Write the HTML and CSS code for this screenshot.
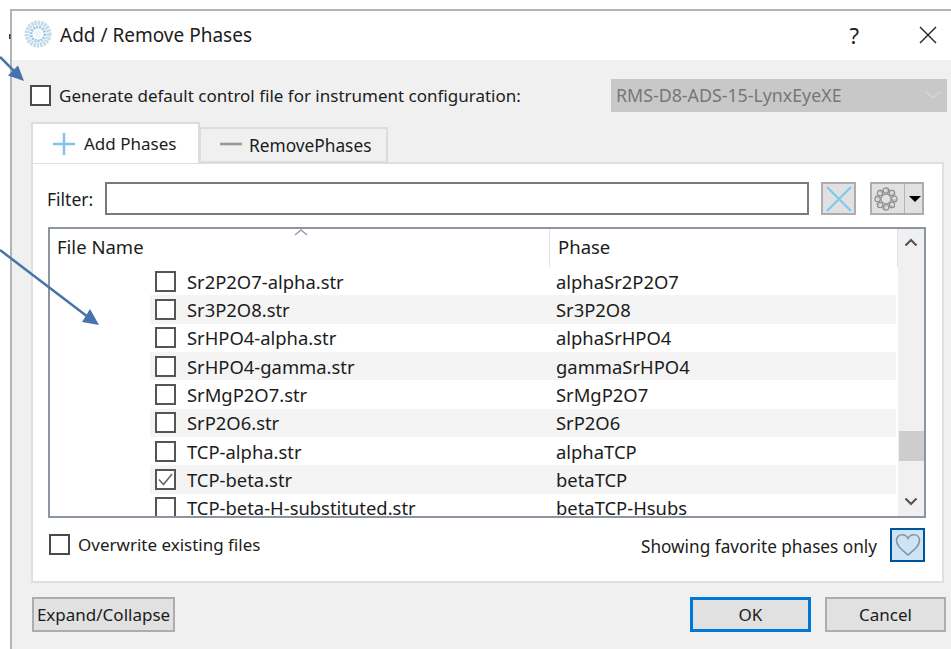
FILE: index.html
```html
<!DOCTYPE html>
<html lang="en">
<head>
<meta charset="utf-8">
<title>Add / Remove Phases</title>
<link rel="stylesheet" href="styles.css">
</head>
<body>
<div class="dialog">
  <header class="titlebar">
    <svg class="app-icon" width="28" height="28" viewBox="0 0 28 28" fill="none">
      <circle cx="14" cy="14" r="11" stroke="#c3dcec" stroke-width="5" stroke-dasharray="2.4 0.8"/>
      <circle cx="14" cy="14" r="6.8" stroke="#9cc3dd" stroke-width="2.6" stroke-dasharray="2 1"/>
      <circle cx="14" cy="14" r="3.4" fill="#eef4f8"/>
    </svg>
    <span class="title">Add / Remove Phases</span>
    <span class="help">?</span>
    <svg class="close" width="18" height="18" viewBox="0 0 18 18"><path d="M1 1l16 16M17 1L1 17" stroke="#222" stroke-width="1.4" fill="none"/></svg>
  </header>

  <div class="body">
    <div class="config-row">
      <label class="check-label"><span class="check"></span><span class="config-text">Generate default control file for instrument configuration:</span></label>
      <div class="select">
        <span>RMS-D8-ADS-15-LynxEyeXE</span>
        <svg width="18" height="10" viewBox="0 0 18 10"><path d="M1.5 1.5L9 8l7.500-6.500" stroke="#d8d8d8" stroke-width="1.300" fill="none"/></svg>
      </div>
    </div>

    <div class="tabs">
      <div class="tab tab-active">
        <svg width="24" height="24" viewBox="0 0 24 24"><path d="M12 1v22M1 12h22" stroke="#7cc4ea" stroke-width="2.400" fill="none"/></svg>
        <span>Add Phases</span>
      </div>
      <div class="tab tab-idle">
        <svg width="24" height="24" viewBox="0 0 24 24"><path d="M1 11h22" stroke="#9a9a90" stroke-width="2.600" fill="none"/></svg>
        <span>RemovePhases</span>
      </div>
    </div>

    <section class="pane">
      <div class="filter-row">
        <span class="filter-label">Filter:</span>
        <div class="filter-input"></div>
        <div class="tool-btn clear-btn">
          <svg width="28" height="26" viewBox="0 0 28 26"><path d="M2 1l24 24M26 1L2 25" stroke="#80c8ee" stroke-width="2.200" fill="none"/></svg>
        </div>
        <div class="tool-btn gear-btn">
          <svg class="gear" width="26" height="26" viewBox="0 0 26 26" fill="none">
            <circle cx="13" cy="13" r="5" stroke="#999" stroke-width="1.300"/>
            <circle cx="13" cy="13" r="8.600" stroke="#999" stroke-width="5" stroke-dasharray="3.400 3.355" opacity="0.35"/>
            <g stroke="#8f8f8f" stroke-width="1.100">
              <circle cx="13" cy="4.600" r="2.700"/><circle cx="13" cy="21.400" r="2.700"/>
              <circle cx="4.600" cy="13" r="2.700"/><circle cx="21.400" cy="13" r="2.700"/>
              <circle cx="7.060" cy="7.060" r="2.700"/><circle cx="18.940" cy="7.060" r="2.700"/>
              <circle cx="7.060" cy="18.940" r="2.700"/><circle cx="18.940" cy="18.940" r="2.700"/>
            </g>
          </svg>
          <span class="gear-divider"></span>
          <span class="caret"></span>
        </div>
      </div>

      <div class="table">
        <div class="table-main">
          <div class="table-head">
            <svg class="sort" width="14" height="7" viewBox="0 0 14 7"><path d="M1 6l6-5 6 5" stroke="#9a9a9a" stroke-width="1.400" fill="none"/></svg>
            <div class="col-file">File Name</div>
            <div class="col-phase">Phase</div>
          </div>
          <div class="rows">
            <div class="row"><span class="check"></span><span class="file">Sr2P2O7-alpha.str</span><span class="phase">alphaSr2P2O7</span></div>
            <div class="row alt"><span class="check"></span><span class="file">Sr3P2O8.str</span><span class="phase">Sr3P2O8</span></div>
            <div class="row"><span class="check"></span><span class="file">SrHPO4-alpha.str</span><span class="phase">alphaSrHPO4</span></div>
            <div class="row alt"><span class="check"></span><span class="file">SrHPO4-gamma.str</span><span class="phase">gammaSrHPO4</span></div>
            <div class="row"><span class="check"></span><span class="file">SrMgP2O7.str</span><span class="phase">SrMgP2O7</span></div>
            <div class="row alt"><span class="check"></span><span class="file">SrP2O6.str</span><span class="phase">SrP2O6</span></div>
            <div class="row"><span class="check"></span><span class="file">TCP-alpha.str</span><span class="phase">alphaTCP</span></div>
            <div class="row alt"><span class="check checked"><svg width="17" height="17" viewBox="0 0 17 17"><path d="M2 8.500l4.500 5L15 3" stroke="#666" stroke-width="1.600" fill="none"/></svg></span><span class="file">TCP-beta.str</span><span class="phase">betaTCP</span></div>
            <div class="row"><span class="check"></span><span class="file">TCP-beta-H-substituted.str</span><span class="phase">betaTCP-Hsubs</span></div>
          </div>
        </div>
        <div class="scrollbar">
          <svg class="arrow-up" width="14" height="9" viewBox="0 0 14 9"><path d="M1.500 7.500L7 2l5.500 5.500" stroke="#555" stroke-width="2.200" fill="none"/></svg>
          <div class="thumb"></div>
          <svg class="arrow-down" width="14" height="9" viewBox="0 0 14 9"><path d="M1.500 1.500L7 7l5.500-5.500" stroke="#555" stroke-width="2.200" fill="none"/></svg>
        </div>
      </div>

      <div class="options-row">
        <label class="check-label overwrite"><span class="check"></span><span>Overwrite existing files</span></label>
        <span class="favorites">Showing favorite phases only</span>
        <div class="heart-btn">
          <svg width="26" height="24" viewBox="0 0 26 24"><path d="M13 22C6 16 1.500 12.500 1.500 7.500 1.500 4 4 1.800 7 1.800c2.500 0 4.800 1.400 6 3.700 1.200-2.300 3.500-3.700 6-3.700 3 0 5.500 2.200 5.500 5.700C24.500 12.500 20 16 13 22z" stroke="#8c9298" stroke-width="1.600" fill="none"/></svg>
        </div>
      </div>
    </section>

    <footer class="footer">
      <button class="btn expand">Expand/Collapse</button>
      <span class="spacer"></span>
      <button class="btn primary">OK</button>
      <button class="btn cancel">Cancel</button>
    </footer>
  </div>
</div>

<!-- Callout arrows drawn over the dialog -->
<svg class="callouts" width="951" height="649" viewBox="0 0 951 649">
  <path d="M0 57L20 77" stroke="#4674aa" stroke-width="2.500" fill="none"/>
  <path d="M24 81L8 75.500 18 65.500z" fill="#4674aa"/>
  <path d="M0 250L88 317" stroke="#4674aa" stroke-width="2.500" fill="none"/>
  <path d="M99 325L82 322 90 309z" fill="#4674aa"/>
  <rect x="9" y="34" width="1.500" height="5" fill="#333"/>
</svg>
</body>
</html>
```

FILE: styles.css
```css
* { box-sizing: border-box; }

html, body { margin: 0; height: 100%; }

body {
  background: #fff;
  font-family: "Noto Sans", "Open Sans", sans-serif;
  font-size: 17px;
  color: #1c1c1c;
  overflow: hidden;
}

.dialog {
  margin: 9px 0 0 10px;
  height: 640px;
  border-top: 2px solid #b4b4b4;
  border-left: 2px solid #b4b4b4;
  display: flex;
  flex-direction: column;
  background: #f0f0f0;
}

.titlebar {
  height: 49px;
  flex: none;
  background: #fff;
  display: flex;
  align-items: center;
  padding: 0 14px 2px 12px;
}

.app-icon { margin-right: 8px; margin-bottom: 1px; }
.title { font-size: 19px; flex: 1; }
.help { font-size: 22px; margin-right: 60px; }

.body { flex: 1; padding: 0 0 0 18px; }

.check {
  width: 21px;
  height: 21px;
  flex: none;
  border: 2px solid #4a4a4a;
  background: #fff;
  display: inline-flex;
  align-items: center;
  justify-content: center;
}

.check-label { display: flex; align-items: center; gap: 8px; }

.config-row {
  height: 62px;
  display: flex;
  align-items: center;
  justify-content: space-between;
  padding: 8px 4px 0 0;
}

.select {
  width: 336px;
  height: 33px;
  background: #c8c8c8;
  color: #777;
  font-size: 17.800px;
  display: flex;
  align-items: center;
  justify-content: space-between;
  padding: 0 5px;
}

.tabs { display: flex; align-items: flex-end; height: 41px; margin-left: 1px; position: relative; z-index: 1; }

.tab {
  display: flex;
  align-items: center;
  gap: 8px;
  border: 2px solid #dcdcdc;
}

.tab-active {
  width: 169px;
  height: 41px;
  background: #fff;
  border-bottom: none;
  padding: 0 0 0 19px;
}

.tab-idle {
  width: 189px;
  height: 36px;
  background: #f0f0f0;
  padding: 0 0 0 18px;
  margin-left: -1px;
  gap: 6px;
  font-size: 17.300px;
}

.pane {
  width: 913px;
  height: 421px;
  margin: -1px 0 0 1px;
  background: #fff;
  border: 2px solid #dfdfdf;
  padding: 18px 0 0 14px;
}

.filter-row { display: flex; align-items: center; height: 33px; }

.filter-label { width: 58px; font-size: 17.500px; }

.filter-input {
  width: 704px;
  height: 33px;
  background: #fff;
  border: 2px solid #7a7a7a;
}

.tool-btn {
  height: 33px;
  background: #e1e1e1;
  border: 2px solid #adadad;
  display: flex;
  align-items: center;
  justify-content: center;
}

.clear-btn { width: 35px; margin-left: 12px; }
.gear-btn { width: 54px; margin-left: 14px; }
.gear { margin-right: 5px; }
.gear-divider { width: 1px; height: 29px; background: #b4b4b4; margin-right: 4px; }
.caret { width: 0; height: 0; border: 6px solid transparent; border-top: 6px solid #000; border-bottom: none; }

.table {
  width: 878px;
  height: 291px;
  margin: 12px 0 0 1px;
  border: 2px solid #8c96a0;
  display: flex;
  overflow: hidden;
  background: #fff;
}

.table-main { width: 848px; flex: none; display: flex; flex-direction: column; }

.table-head {
  position: relative;
  height: 38px;
  flex: none;
  display: flex;
  align-items: center;
  font-size: 18.500px;
}

.sort { position: absolute; left: 244px; top: 0; }

.col-file { width: 500px; padding-left: 7px; height: 100%; line-height: 36px; border-right: 1px solid #e2e2e2; }
.col-phase { flex: 1; padding-left: 8px; height: 100%; line-height: 36px; border-right: 1px solid #e2e2e2; }

.rows { flex: 1; overflow: hidden; font-size: 18.400px; }

.row {
  height: 28.330px;
  margin-left: 100px;
  display: flex;
  align-items: center;
  padding-left: 5px;
  width: 746px;
}

.row.alt { background: #f4f4f4; }
.row .file { width: 380px; padding-left: 11px; }
.row .check { border-color: #555; }

.scrollbar {
  width: 28px;
  flex: none;
  background: #f0f0f0;
  position: relative;
}

.arrow-up { position: absolute; left: 6px; top: 9px; }
.arrow-down { position: absolute; right: 8px; bottom: 10px; }
.thumb { position: absolute; left: 1px; right: 2px; top: 202px; height: 30px; background: #cdcdcd; }

.options-row { display: flex; align-items: center; height: 34px; margin-top: 10px; padding-right: 17px; }

.overwrite { font-size: 17px; margin: -2px 0 0 2px; flex: 1; }

.favorites { font-size: 17.200px; margin: 3px 13px 0 0; }

.heart-btn {
  width: 35px;
  height: 34px;
  background: #cce4f7;
  border: 2px solid #005499;
  display: flex;
  align-items: center;
  justify-content: center;
}

.footer { display: flex; align-items: center; margin-top: 14px; padding-left: 2px; padding-right: 5px; }

.spacer { flex: 1; }

.btn {
  font: inherit;
  font-size: 17px;
  color: #1c1c1c;
  height: 35px;
  padding: 0;
  background: #e1e1e1;
  border: 2px solid #adadad;
}

.expand { width: 143px; }
.primary { width: 121px; border: 3px solid #0078d7; margin-right: 14px; }
.cancel { width: 121px; }

.callouts { position: absolute; left: 0; top: 0; pointer-events: none; }
```
